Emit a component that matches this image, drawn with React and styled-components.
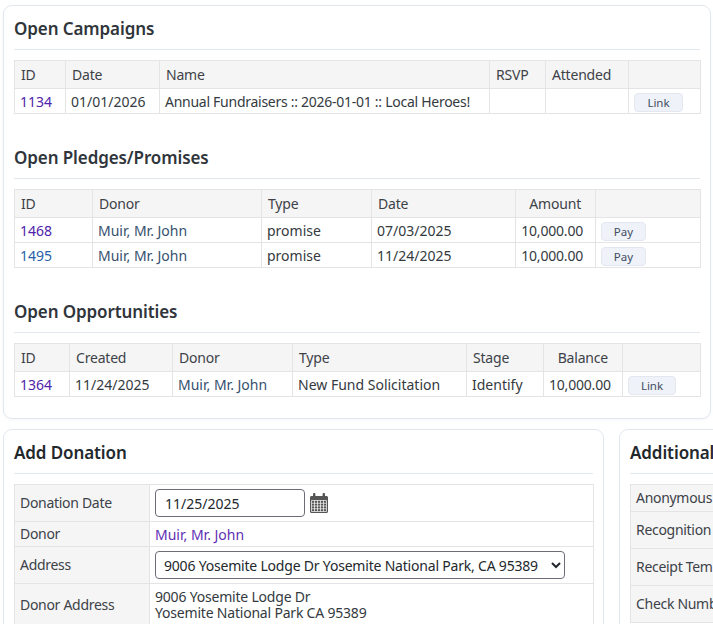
import React from "react";
import styled, { createGlobalStyle } from "styled-components";

const GlobalStyle = createGlobalStyle`
  html, body {
    margin: 0;
    padding: 0;
    background: #fff;
    overflow: hidden;
    height: 624px;
  }
  body {
    font-family: "Noto Sans", "Open Sans", sans-serif;
    font-size: 14px;
    color: #343a40;
  }
`;

const campaignCols = [51, 94, 330, 56, 83, 72];
const pledgeCols = [78, 169, 110, 144, 80, 105];
const opportunityCols = [55, 103, 120, 174, 77, 79, 78];

function Columns({ widths }) {
  return (
    <colgroup>
      {widths.map((w, i) => (
        <Col key={i} $w={w} />
      ))}
    </colgroup>
  );
}

function CalendarIcon() {
  return (
    <CalendarSvg viewBox="0 0 18 20" aria-hidden="true">
      <path
        fill="#555"
        d="M0 4.500C0 3.700.7 3 1.500 3H3V1.200C3 .5 3.500 0 4.200 0S5.400 .5 5.400 1.200V3h7.200V1.200C12.600 .5 13.100 0 13.800 0S15 .5 15 1.200V3h1.500C17.300 3 18 3.700 18 4.500V18.500C18 19.300 17.300 20 16.500 20H1.500C.7 20 0 19.300 0 18.500Z"
      />
      <path
        fill="none"
        stroke="#fff"
        strokeWidth="0.7"
        d="M1.500 7.500H16.500V18.500H1.500ZM1.500 10.250H16.500M1.500 13H16.500M1.500 15.750H16.500M4.500 7.500V18.500M7.500 7.500V18.500M10.500 7.500V18.500M13.500 7.500V18.500"
      />
    </CalendarSvg>
  );
}

export default function App() {
  return (
    <Page>
      <GlobalStyle />
      <Card>
        <Heading>Open Campaigns</Heading>
        <Table>
          <Columns widths={campaignCols} />
          <thead>
            <tr>
              <Th>ID</Th>
              <Th>Date</Th>
              <Th>Name</Th>
              <Th>RSVP</Th>
              <Th>Attended</Th>
              <Th />
            </tr>
          </thead>
          <tbody>
            <tr>
              <Td><IdLink>1134</IdLink></Td>
              <Td>01/01/2026</Td>
              <NameCell>Annual Fundraisers :: 2026-01-01 :: Local Heroes!</NameCell>
              <Td />
              <Td />
              <Td><SmallButton $w={49}>Link</SmallButton></Td>
            </tr>
          </tbody>
        </Table>

        <Heading>Open Pledges/Promises</Heading>
        <Table>
          <Columns widths={pledgeCols} />
          <thead>
            <tr>
              <Th>ID</Th>
              <Th>Donor</Th>
              <Th>Type</Th>
              <Th>Date</Th>
              <Th $right>Amount</Th>
              <Th />
            </tr>
          </thead>
          <tbody>
            <tr>
              <Td><IdLink>1468</IdLink></Td>
              <Td><DonorLink>Muir, Mr. John</DonorLink></Td>
              <Td>promise</Td>
              <Td>07/03/2025</Td>
              <Td $right>10,000.00</Td>
              <Td><SmallButton $w={45}>Pay</SmallButton></Td>
            </tr>
            <tr>
              <Td><IdLink $fresh>1495</IdLink></Td>
              <Td><DonorLink>Muir, Mr. John</DonorLink></Td>
              <Td>promise</Td>
              <Td>11/24/2025</Td>
              <Td $right>10,000.00</Td>
              <Td><SmallButton $w={45}>Pay</SmallButton></Td>
            </tr>
          </tbody>
        </Table>

        <Heading>Open Opportunities</Heading>
        <Table>
          <Columns widths={opportunityCols} />
          <thead>
            <tr>
              <Th>ID</Th>
              <Th>Created</Th>
              <Th>Donor</Th>
              <Th>Type</Th>
              <Th>Stage</Th>
              <Th $right>Balance</Th>
              <Th />
            </tr>
          </thead>
          <tbody>
            <tr>
              <Td><IdLink>1364</IdLink></Td>
              <Td>11/24/2025</Td>
              <Td><DonorLink>Muir, Mr. John</DonorLink></Td>
              <Td>New Fund Solicitation</Td>
              <Td>Identify</Td>
              <Td $right>10,000.00</Td>
              <Td><SmallButton $w={48}>Link</SmallButton></Td>
            </tr>
          </tbody>
        </Table>
      </Card>

      <FormRow>
        <FormCard $w={601}>
          <FormHeading>Add Donation</FormHeading>
          <Table>
            <Columns widths={[135, 444]} />
            <tbody>
              <tr>
                <LabelCell>Donation Date</LabelCell>
                <FieldCell>
                  <DateField>
                    <DateInput defaultValue="11/25/2025" />
                    <CalendarIcon />
                  </DateField>
                </FieldCell>
              </tr>
              <tr>
                <LabelCell>Donor</LabelCell>
                <TextCell><DonorLink $visited>Muir, Mr. John</DonorLink></TextCell>
              </tr>
              <tr>
                <LabelCell>Address</LabelCell>
                <FieldCell>
                  <AddressSelect defaultValue="a">
                    <option value="a">9006 Yosemite Lodge Dr Yosemite National Park, CA 95389</option>
                  </AddressSelect>
                </FieldCell>
              </tr>
              <tr>
                <LabelCell>Donor Address</LabelCell>
                <TextCell>
                  <AddressText>
                    9006 Yosemite Lodge Dr
                    <br />
                    Yosemite National Park CA 95389
                  </AddressText>
                </TextCell>
              </tr>
            </tbody>
          </Table>
        </FormCard>

        <FormCard $w={400}>
          <FormHeading>Additional Information</FormHeading>
          <Table>
            <Columns widths={[135, 245]} />
            <tbody>
              <tr>
                <SideLabel $h={27}>Anonymous</SideLabel>
                <TextCell />
              </tr>
              <tr>
                <SideLabel $h={37}>Recognition</SideLabel>
                <TextCell />
              </tr>
              <tr>
                <SideLabel $h={37}>Receipt Template</SideLabel>
                <TextCell />
              </tr>
              <tr>
                <SideLabel $h={37}>Check Number</SideLabel>
                <TextCell />
              </tr>
            </tbody>
          </Table>
        </FormCard>
      </FormRow>
    </Page>
  );
}

const Page = styled.div`
  width: 1100px;
  padding: 5px 0 0 3px;
`;

const Card = styled.section`
  box-sizing: border-box;
  width: 708px;
  padding: 0 10px 21px;
  background: #fff;
  border: 1px solid #e3e8f0;
  border-radius: 9px;
  box-shadow: 0 1px 3px rgba(120, 140, 170, 0.08);
`;

const Heading = styled.h2`
  margin: 0 0 10px;
  padding: 10px 0 7px;
  height: 44px;
  box-sizing: border-box;
  border-bottom: 1px solid #e3e8f0;
  font-size: 17px;
  line-height: 26px;
  font-weight: 600;
  letter-spacing: -0.1px;
  color: #2f353b;

  table + & {
    margin-top: 21px;
  }
`;

const Table = styled.table`
  width: 100%;
  table-layout: fixed;
  border-collapse: collapse;
  border: 1px solid #e4e4e4;
`;

const Col = styled.col`
  width: ${({ $w }) => $w}px;
`;

const Th = styled.th`
  height: 28px;
  padding: 0 ${({ $right }) => ($right ? "14px" : "6px")} 0 6px;
  box-sizing: border-box;
  background: #f5f5f5;
  border: 1px solid #e4e4e4;
  font-weight: 400;
  font-size: 14px;
  letter-spacing: -0.2px;
  color: #3d4248;
  text-align: ${({ $right }) => ($right ? "right" : "left")};
  white-space: nowrap;
`;

const Td = styled.td`
  height: 25px;
  padding: 0 ${({ $right }) => ($right ? "12px" : "5px")} 0 5px;
  box-sizing: border-box;
  border: 1px solid #e4e4e4;
  font-size: 14px;
  letter-spacing: ${({ $right }) => ($right ? "-0.2px" : "normal")};
  color: #343a40;
  text-align: ${({ $right }) => ($right ? "right" : "left")};
  white-space: nowrap;
`;

const NameCell = styled(Td)`
  letter-spacing: -0.27px;
`;

const IdLink = styled.a`
  color: ${({ $fresh }) => ($fresh ? "#2a5fa8" : "#4f23ab")};
`;

const DonorLink = styled.a`
  color: ${({ $visited }) => ($visited ? "#5f2fb4" : "#36506e")};
`;

const SmallButton = styled.button`
  display: block;
  width: ${({ $w }) => $w}px;
  height: 19px;
  margin-top: 2px;
  padding: 0;
  background: #eff2f8;
  border: 1px solid #e2e7f0;
  border-radius: 4px;
  font-family: inherit;
  font-size: 11.5px;
  color: #3f4d63;
`;

const FormRow = styled.div`
  display: flex;
  align-items: flex-start;
  gap: 15px;
  margin-top: 10px;
`;

const FormCard = styled.section`
  box-sizing: border-box;
  flex: none;
  width: ${({ $w }) => $w}px;
  padding: 0 10px 20px;
  background: #fff;
  border: 1px solid #e3e8f0;
  border-radius: 9px;
`;

const FormHeading = styled(Heading)`
  color: #23282d;
`;

const LabelCell = styled.td`
  padding: 0 5px 2px;
  box-sizing: border-box;
  background: #f5f5f5;
  border: 1px solid #e4e4e4;
  letter-spacing: -0.3px;
  color: #3d4248;
  white-space: nowrap;
`;

const SideLabel = styled(LabelCell)`
  height: ${({ $h }) => $h}px;
  overflow: hidden;
`;

const FieldCell = styled.td`
  padding: 4px 5px;
  box-sizing: border-box;
  border: 1px solid #e4e4e4;
  white-space: nowrap;
`;

const TextCell = styled(FieldCell)`
  padding: 0 5px;
  height: 25px;
`;

const DateField = styled.div`
  display: flex;
  align-items: center;
  gap: 5px;
`;

const DateInput = styled.input`
  box-sizing: border-box;
  width: 150px;
  height: 28px;
  padding: 0 9px;
  border: 1px solid #6d6d7a;
  border-radius: 4px;
  font-family: inherit;
  font-size: 14px;
  color: #23282d;
`;

const CalendarSvg = styled.svg`
  width: 18px;
  height: 20px;
  flex: none;
`;

const AddressSelect = styled.select`
  display: block;
  box-sizing: border-box;
  width: 410px;
  height: 28px;
  padding: 0 4px;
  background: #fff;
  border: 1px solid #6d6d7a;
  border-radius: 4px;
  font-family: inherit;
  font-size: 14px;
  letter-spacing: -0.2px;
  color: #23282d;
`;

const AddressText = styled.div`
  padding: 5px 0;
  line-height: 16px;
  letter-spacing: -0.2px;
  color: #343a40;
`;
